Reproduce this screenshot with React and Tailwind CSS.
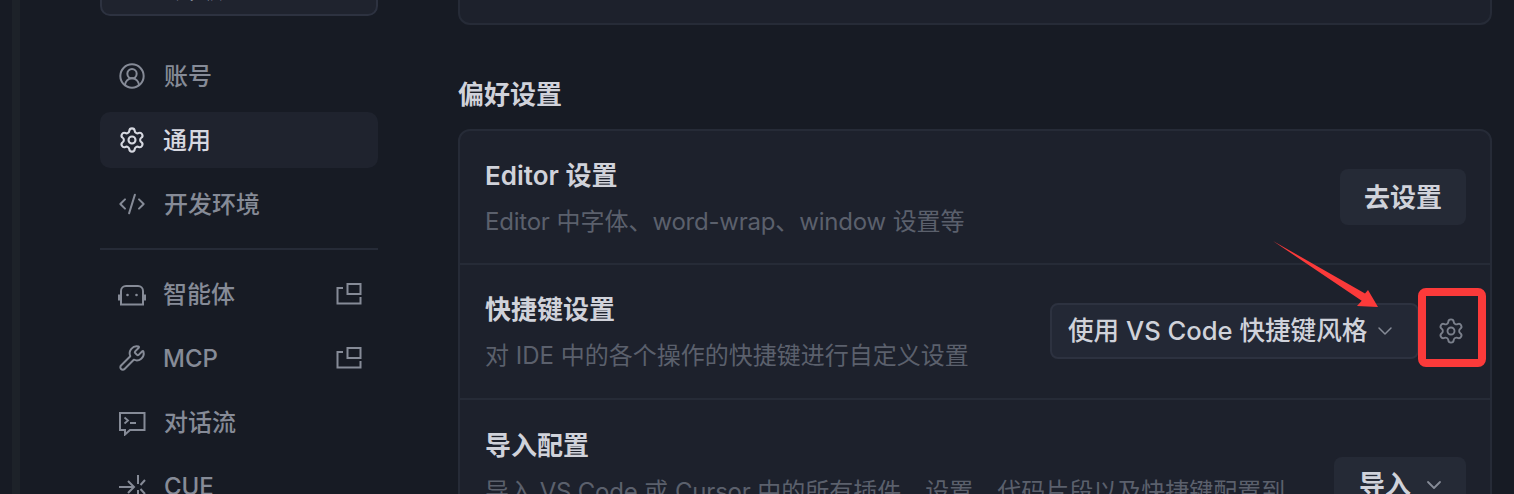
import React from 'react';
import { ChevronDown, CircleUserRound, CodeXml, Settings, Wrench } from 'lucide-react';

const font = 'font-[Inter,"Noto_Sans_CJK_SC",sans-serif]';

function BotIcon() {
    return (
        <svg width="28" height="28" viewBox="0 0 28 28" fill="none" stroke="currentColor" strokeWidth="2">
            <path d="M3 24.500V11a5 5 0 0 1 5-5h12a5 5 0 0 1 5 5v13.500z" />
            <path d="M1 14.500v6M27 14.500v6" />
            <circle cx="9.500" cy="15" r="1.300" fill="currentColor" stroke="none" />
            <circle cx="18.500" cy="15" r="1.300" fill="currentColor" stroke="none" />
        </svg>
    );
}

function ChatIcon() {
    return (
        <svg width="28" height="28" viewBox="0 0 28 28" fill="none" stroke="currentColor" strokeWidth="2">
            <path d="M2 5H26.500V22H12L7 26.500V22H2Z" />
            <path d="M6.500 9.500l3.500 3-3.500 3M12 15h6" strokeWidth="1.800" />
        </svg>
    );
}

function CueIcon() {
    return (
        <svg width="28" height="28" viewBox="0 0 28 28" fill="none" stroke="currentColor" strokeWidth="2">
            <path d="M1 15H16M10 9l6 6-6 6" />
            <path d="M20 3v9M20 18v9M27 8l-4.500 5M27 22l-4.500-5" />
        </svg>
    );
}

function PopIcon() {
    return (
        <svg width="26" height="24" viewBox="0 0 26 24" fill="none" stroke="currentColor" strokeWidth="2" className="text-[#868b97]">
            <rect x="11.500" y="2" width="13" height="10" />
            <path d="M7 6H1.500V21.500H24.500V15" />
        </svg>
    );
}

function NavItem({ icon, label, active, pop, nudge }) {
    return (
        <div className={`flex h-14 items-center rounded-[10px] pl-[18px] pr-[16px] text-2xl font-medium ${active ? 'bg-[#1f232e] text-[#d6d8e0]' : 'text-[#868b97]'}`}>
            <span className="flex w-[28px] justify-center">{icon}</span>
            <span className={`flex-1 pt-0.5 ${nudge ? 'ml-[18px]' : 'ml-[17px]'}`}>{label}</span>
            {pop && <PopIcon />}
        </div>
    );
}

// latin words run a bit narrower than Inter here
function Lt({ children }) {
    return <span className="tracking-[-0.22px]">{children}</span>;
}

function Row({ title, desc, children, height, last }) {
    return (
        <div className={`flex items-center justify-between pl-[25px] pr-[24px] ${height} ${last ? '' : 'border-b-2 border-[#262b37]'}`}>
            <div className="w-[806px] pt-0.5">
                <div className="text-[26px] leading-[36px] font-semibold text-[#d0d2da]">{title}</div>
                <div className="mt-[11px] text-2xl leading-[34px] text-[#5b606c]">{desc}</div>
            </div>
            {children}
        </div>
    );
}

export default function App() {
    return (
        <div className={`relative flex h-[494px] w-[1514px] overflow-hidden bg-[#171b24] ${font}`}>
            <div className="ml-3 w-2 bg-[#1d2229]"></div>

            {/* Sidebar */}
            <aside className="ml-[80px] w-[278px]">
                <div className="-mt-[30px] flex h-[46px] items-center rounded-[10px] border-2 border-[#2d3240] bg-[#1f232e] pb-[6px] pl-[73px] text-2xl text-[#d6d8e0]">
                    升级
                </div>
                <nav className="mt-8 flex flex-col gap-2">
                    <NavItem nudge icon={<CircleUserRound size={28} strokeWidth={1.7} />} label="账号" />
                    <NavItem active icon={<Settings size={28} strokeWidth={1.8} />} label="通用" />
                    <NavItem nudge icon={<CodeXml size={28} strokeWidth={1.7} />} label="开发环境" />
                </nav>
                <div className="my-4 h-0.5 bg-[#262b37]"></div>
                <nav className="flex flex-col gap-2">
                    <NavItem icon={<BotIcon />} label="智能体" pop />
                    <NavItem icon={<Wrench size={28} strokeWidth={1.7} />} label="MCP" pop />
                    <NavItem nudge icon={<ChatIcon />} label="对话流" />
                    <NavItem nudge icon={<CueIcon />} label="CUE" />
                </nav>
            </aside>

            {/* Main */}
            <main className="ml-20 w-[1034px]">
                <div className="-mt-[40px] h-[65px] rounded-xl border-2 border-[#262b37] bg-[#1d212c]"></div>
                <h2 className="mt-[52px] text-[26px] leading-[36px] font-semibold text-[#d0d2da]">偏好设置</h2>
                <div className="mt-[16px] rounded-xl border-2 border-[#262b37] bg-[#1d212c]">
                    <Row
                        height="h-[134px]"
                        title="Editor 设置"
                        desc={<><Lt>Editor</Lt> 中字体、<Lt>word-wrap</Lt>、<Lt>window</Lt> 设置等</>}
                    >
                        <button className="h-14 w-[126px] rounded-lg bg-[#252a36] text-[26px] font-semibold text-[#d0d2da]">去设置</button>
                    </Row>
                    <Row height="h-[135px]" title="快捷键设置" desc="对 IDE 中的各个操作的快捷键进行自定义设置">
                        <div className="-mt-0.5 mr-px flex items-center">
                            <div className="flex h-14 w-[369px] items-center rounded-lg border-2 border-[#2d3240] bg-[#232835] pl-4 text-[25.6px] font-medium text-[#d0d2da]">
                                <span className="pt-0.5">使用 VS Code 快捷键风格</span>
                                <ChevronDown size={24} strokeWidth={1.5} className="ml-1.5 text-[#868b97]" />
                            </div>
                            <Settings size={28} strokeWidth={1.6} className="ml-[18px] text-[#7b808c]" />
                        </div>
                    </Row>
                    <Row
                        last
                        height="h-[169px]"
                        title="导入配置"
                        desc={<>导入 <Lt>VS Code</Lt> 或 <Lt>Cursor</Lt> 中的所有插件、设置、代码片段以及快捷键配置到 TRAE 中</>}
                    >
                        <button className="flex h-14 w-[132px] items-center gap-[11px] rounded-lg bg-[#252a36] pl-[25px] text-[26px] font-semibold text-[#d0d2da]">
                            导入
                            <ChevronDown size={24} strokeWidth={1.8} className="text-[#868b97]" />
                        </button>
                    </Row>
                </div>
            </main>

            {/* Annotation */}
            <div className="absolute left-[1418px] top-[288px] h-[79px] w-[68px] rounded-[8px] border-[8px] border-[#fb3a3a]"></div>
            <svg className="absolute left-[1270px] top-[238px]" width="112" height="72" viewBox="0 0 112 72">
                <path d="M3 3L95 55.500L98 52L108 69L87 68L91.700 62.700Z" fill="#fb3a3a" />
            </svg>
        </div>
    );
}
